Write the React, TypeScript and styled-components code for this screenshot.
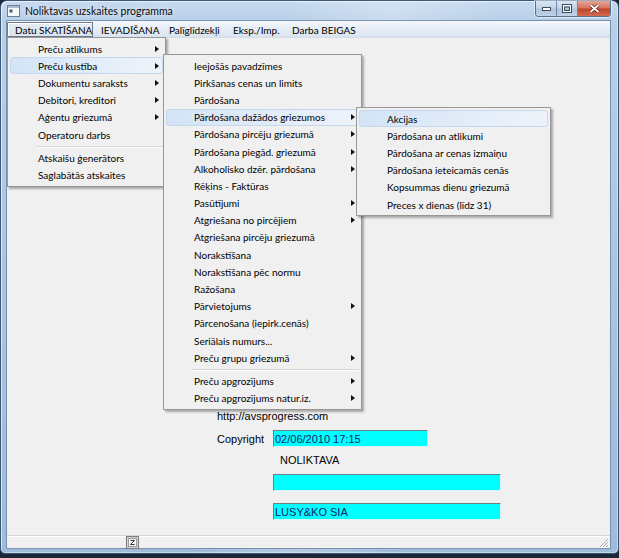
import styled, { createGlobalStyle, css } from "styled-components"

const GlobalStyle = createGlobalStyle`
  html, body {
    margin: 0;
    padding: 0;
    background: #1b2738;
  }
  body {
    font-family: Lato, "Open Sans", sans-serif;
  }
`

type MenuEntry = {
  label: string
  sub?: boolean
  active?: boolean
  separator?: boolean
}

const topMenu = [
  { label: "Datu SKATĪŠANA", width: 86, open: true },
  { label: "IEVADĪŠANA", width: 68 },
  { label: "Palīglīdzekļi", width: 64 },
  { label: "Eksp./Imp.", width: 59 },
  { label: "Darba BEIGAS", width: 72 },
]

const mainMenu: MenuEntry[] = [
  { label: "Preču atlikums", sub: true },
  { label: "Preču kustība", sub: true, active: true },
  { label: "Dokumentu saraksts", sub: true },
  { label: "Debitori, kreditori", sub: true },
  { label: "Aģentu griezumā", sub: true },
  { label: "Operatoru darbs" },
  { label: "", separator: true },
  { label: "Atskaišu ģenerātors" },
  { label: "Saglabātās atskaites" },
]

const movementMenu: MenuEntry[] = [
  { label: "Ieejošās pavadzīmes" },
  { label: "Pirkšanas cenas un limits" },
  { label: "Pārdošana" },
  { label: "Pārdošana dažādos griezumos", sub: true, active: true },
  { label: "Pārdošana pircēju griezumā", sub: true },
  { label: "Pārdošana piegād. griezumā", sub: true },
  { label: "Alkoholisko dzēr. pārdošana", sub: true },
  { label: "Rēķins - Faktūras" },
  { label: "Pasūtījumi", sub: true },
  { label: "Atgriešana no pircējiem", sub: true },
  { label: "Atgriešana pircēju griezumā" },
  { label: "Norakstīšana" },
  { label: "Norakstīšana pēc normu" },
  { label: "Ražošana" },
  { label: "Pārvietojums", sub: true },
  { label: "Pārcenošana (iepirk.cenās)" },
  { label: "Seriālais numurs..." },
  { label: "Preču grupu griezumā", sub: true },
  { label: "", separator: true },
  { label: "Preču apgrozījums", sub: true },
  { label: "Preču apgrozījums natur.iz.", sub: true },
]

const salesMenu: MenuEntry[] = [
  { label: "Akcijas", active: true },
  { label: "Pārdošana un atlikumi" },
  { label: "Pārdošana ar cenas izmaiņu" },
  { label: "Pārdošana ieteicamās cenās" },
  { label: "Kopsummas dienu griezumā" },
  { label: "Preces x dienas (līdz 31)" },
]

const App = () => {
  return (
    <>
      <GlobalStyle />
      <Window>
        <TitleBar>
          <AppIcon />
          <TitleText>Noliktavas uzskaites programma</TitleText>
          <CaptionGroup>
            <CaptionButton $w={20}>
              <svg width="9" height="4" viewBox="0 0 9 4">
                <rect x="0.5" y="0.5" width="8" height="3" fill="#fff" stroke="#3d4d60" />
              </svg>
            </CaptionButton>
            <CaptionButton $w={20}>
              <svg width="10" height="9" viewBox="0 0 10 9">
                <rect x="0.5" y="0.5" width="9" height="8" fill="none" stroke="#3d4d60" />
                <rect x="1.5" y="1.5" width="7" height="6" fill="none" stroke="#fff" />
                <rect x="2.5" y="3" width="5" height="3.5" fill="none" stroke="#3d4d60" />
              </svg>
            </CaptionButton>
            <CaptionButton $w={32} $close>
              <svg width="11" height="9" viewBox="0 0 11 9">
                <path d="M1.5 1 L9.5 8 M9.5 1 L1.5 8" stroke="#5b1a12" strokeWidth="3.2" />
                <path d="M1.5 1 L9.5 8 M9.5 1 L1.5 8" stroke="#fff" strokeWidth="1.8" />
              </svg>
            </CaptionButton>
          </CaptionGroup>
        </TitleBar>

        <ClientFrame>
          <MenuBar>
            {topMenu.map((m) => (
              <MenuBarItem key={m.label} $w={m.width} $open={m.open}>
                {m.label}
              </MenuBarItem>
            ))}
          </MenuBar>

          <Client>
            <Form>
              <LinkText>http://avsprogress.com</LinkText>
              <FieldRow>
                <FieldLabel>Copyright</FieldLabel>
                <Field $width={155}>02/06/2010 17:15</Field>
              </FieldRow>
              <Caption>NOLIKTAVA</Caption>
              <Field $width={228} $indent={56} $gap={7}></Field>
              <Field $width={228} $indent={56} $gap={12}>LUSY&amp;KO SIA</Field>
            </Form>
          </Client>

          <StatusBar>
            <StatusIcon>
              <svg width="13" height="13" viewBox="0 0 13 13">
                <rect x="0.5" y="0.5" width="12" height="12" fill="#d4d4d4" stroke="#7c7c7c" />
                <rect x="2.5" y="2.5" width="8" height="8" fill="#f4f4f4" stroke="#555" strokeDasharray="1 1" />
                <path d="M4.5 4.5 H8.5 L4.5 8.5 H8.5" fill="none" stroke="#333" />
              </svg>
            </StatusIcon>
            <Grip>
              <svg width="11" height="11" viewBox="0 0 11 11">
                <path d="M10 2 L2 10 M10 5 L5 10 M10 8 L8 10" stroke="#a8a8a8" strokeWidth="1" />
                <path d="M10.8 2.8 L2.8 10.8 M10.8 5.8 L5.8 10.8" stroke="#fff" strokeWidth="1" />
              </svg>
            </Grip>
          </StatusBar>
        </ClientFrame>

        <Menu $left={6} $top={36} $width={159}>
          {mainMenu.map((item, i) => (
            <MenuRow key={i} item={item} />
          ))}
        </Menu>
        <Menu $left={162} $top={53} $width={199}>
          {movementMenu.map((item, i) => (
            <MenuRow key={i} item={item} />
          ))}
        </Menu>
        <Menu $left={355} $top={106} $width={195}>
          {salesMenu.map((item, i) => (
            <MenuRow key={i} item={item} />
          ))}
        </Menu>
      </Window>
    </>
  )
}

const MenuRow = ({ item }: { item: MenuEntry }) => {
  if (item.separator) {
    return <MenuSeparator />
  }
  return (
    <MenuItem $active={item.active}>
      <MenuLabel>{item.label}</MenuLabel>
      {item.sub && <SubArrow />}
    </MenuItem>
  )
}

const AppIcon = () => (
  <svg width="13" height="12" viewBox="0 0 13 12">
    <rect x="0.5" y="0.5" width="12" height="11" fill="#f7f7f7" stroke="#6e7d90" />
    <rect x="1" y="1" width="11" height="2" fill="#a9bdd4" />
    <rect x="2.5" y="4.5" width="3" height="3" fill="#3f5f88" />
  </svg>
)

const Window = styled.div`
  position: relative;
  width: 619px;
  height: 554px;
  box-sizing: border-box;
  display: flex;
  flex-direction: column;
  border: 1px solid #3c5878;
  border-radius: 7px 7px 5px 5px;
  padding: 0 7px 4px 5px;
  background:
    linear-gradient(100deg, rgba(255, 255, 255, 0) 40%, rgba(255, 255, 255, 0.25) 55%, rgba(255, 255, 255, 0) 70%),
    linear-gradient(to bottom, #c7daef 0px, #b8cfe8 20px, #a8c2df 60%, #9fbbdb 100%);
  box-shadow: inset 1px 1px 0 rgba(255, 255, 255, 0.6), inset -1px -1px 0 rgba(255, 255, 255, 0.4);
`

const TitleBar = styled.div`
  height: 19px;
  display: flex;
  align-items: center;
  gap: 5px;
  flex-shrink: 0;
  padding-left: 1px;
`

const TitleText = styled.span`
  font-family: Lato, "Open Sans", sans-serif;
  font-size: 10.5px;
  color: #0b0b0b;
  text-shadow: 0 0 4px rgba(255, 255, 255, 0.9);
`

const CaptionGroup = styled.div`
  margin-left: auto;
  align-self: flex-start;
  display: flex;
  border: 1px solid #55708f;
  border-top: none;
  border-radius: 0 0 4px 4px;
  overflow: hidden;
  box-shadow: 0 0 0 1px rgba(255, 255, 255, 0.5);
`

const CaptionButton = styled.div<{ $w: number; $close?: boolean }>`
  width: ${(p) => p.$w}px;
  height: 15px;
  display: flex;
  align-items: center;
  justify-content: center;
  background: linear-gradient(to bottom, #d9e5f2 0%, #c2d3e6 48%, #adc2da 52%, #bfd2e7 100%);
  & + & {
    border-left: 1px solid #6e87a4;
  }
  ${(p) =>
    p.$close &&
    css`
      background: linear-gradient(to bottom, #e7a593 0%, #d4735e 48%, #c0432b 52%, #d36a4c 100%);
    `}
`

const ClientFrame = styled.div`
  flex: 1;
  display: flex;
  flex-direction: column;
  border: 1px solid #7891ad;
  background: #f0f0f0;
  min-height: 0;
`

const MenuBar = styled.div`
  height: 16px;
  flex-shrink: 0;
  display: flex;
  align-items: stretch;
  background: linear-gradient(to bottom, #f5f8fc 0%, #e6edf6 50%, #d9e3ef 100%);
  border-bottom: 1px solid #d4dce6;
  font-size: 10px;
  color: #000;
`

const MenuBarItem = styled.div<{ $w: number; $open?: boolean }>`
  box-sizing: border-box;
  width: ${(p) => p.$w}px;
  display: flex;
  align-items: center;
  padding-left: 7px;
  margin-top: 1px;
  border: 1px solid transparent;
  white-space: nowrap;
  ${(p) =>
    p.$open &&
    css`
      border-color: #6c7a8b;
      background: linear-gradient(to bottom, #e6ecf3, #dbe3ed);
      box-shadow: inset 1px 1px 0 #fff;
    `}
`

const Client = styled.div`
  flex: 1;
  min-height: 0;
`

const Form = styled.div`
  display: flex;
  flex-direction: column;
  align-items: flex-start;
  padding: 371px 0 0 210px;
  font-family: "Liberation Sans", Arial, sans-serif;
  font-size: 11px;
  color: #000;
`

const LinkText = styled.div`
  height: 14px;
  line-height: 14px;
`

const FieldRow = styled.div`
  display: flex;
  align-items: center;
  margin-top: 7px;
`

const FieldLabel = styled.div`
  width: 56px;
`

const Caption = styled.div`
  height: 14px;
  line-height: 14px;
  margin: 6px 0 0 63px;
`

const Field = styled.div<{ $width: number; $indent?: number; $gap?: number }>`
  box-sizing: border-box;
  width: ${(p) => p.$width}px;
  height: 17px;
  margin-left: ${(p) => p.$indent ?? 0}px;
  margin-top: ${(p) => p.$gap ?? 0}px;
  padding-left: 1px;
  line-height: 16px;
  background: #00ffff;
  border-top: 1px solid #6f7f80;
  border-left: 1px solid #6f7f80;
  border-right: 1px solid #d8f4f4;
  border-bottom: 1px solid #d8f4f4;
  color: #0d1a6a;
  white-space: nowrap;
`

const StatusBar = styled.div`
  height: 12px;
  flex-shrink: 0;
  display: flex;
  align-items: flex-end;
  border-top: 1px solid #d6d6d6;
  box-shadow: inset 0 1px 0 #fff;
  padding-left: 119px;
`

const StatusIcon = styled.div`
  display: flex;
  margin-bottom: -1px;
`

const Grip = styled.div`
  display: flex;
  margin-left: auto;
  margin-right: 1px;
`

const Menu = styled.div<{ $left: number; $top: number; $width: number }>`
  position: absolute;
  left: ${(p) => p.$left}px;
  top: ${(p) => p.$top}px;
  width: ${(p) => p.$width}px;
  box-sizing: border-box;
  padding: 2px;
  background: #f0f0f0;
  border: 1px solid #979797;
  box-shadow: 2px 2px 2px rgba(0, 0, 0, 0.3);
  font-family: Lato, "Open Sans", sans-serif;
  font-size: 10px;
  color: #000;
`

const MenuItem = styled.div<{ $active?: boolean }>`
  box-sizing: border-box;
  height: 17.2px;
  display: flex;
  align-items: center;
  padding: 0 3px 0 27px;
  border: 1px solid transparent;
  border-radius: 3px;
  ${(p) =>
    p.$active &&
    css`
      background: linear-gradient(to right, #d3e4f6 0%, #dfeaf8 45%, #eef3fa 100%);
      border-color: #c4d8ee;
    `}
`

const MenuLabel = styled.span`
  flex: 1;
  white-space: nowrap;
`

const SubArrow = styled.span`
  width: 0;
  height: 0;
  border-left: 4px solid #111;
  border-top: 3.5px solid transparent;
  border-bottom: 3.5px solid transparent;
`

const MenuSeparator = styled.div`
  height: 6px;
  display: flex;
  align-items: center;
  padding-left: 26px;
  &::after {
    content: "";
    flex: 1;
    height: 1px;
    background: #d7d7d7;
    box-shadow: 0 1px 0 #fff;
  }
`

export default App
